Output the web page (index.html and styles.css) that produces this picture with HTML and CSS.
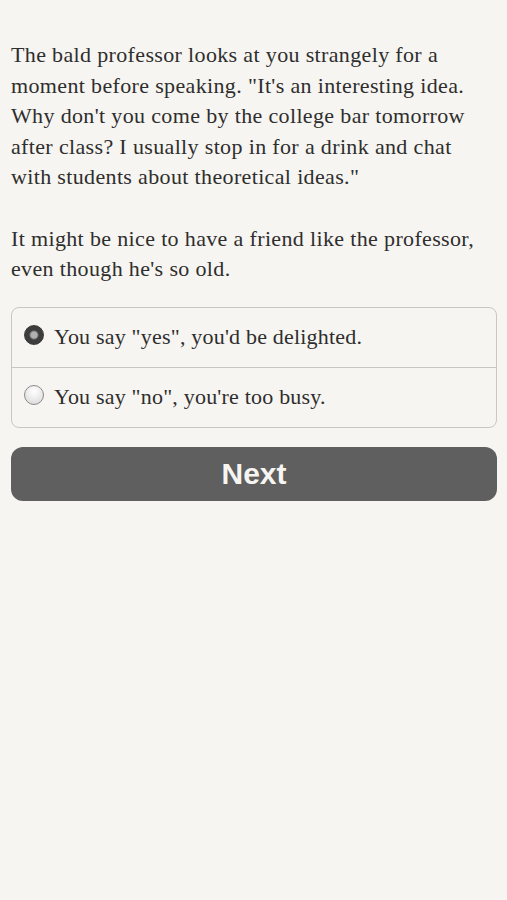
FILE: index.html
```html
<!DOCTYPE html>
<html lang="en">
<head>
    <meta charset="UTF-8">
    <meta name="viewport" content="width=device-width, initial-scale=1.0">
    <title>Story</title>
    <link rel="stylesheet" href="styles.css">
</head>
<body>
    <div class="page">
        <div class="passage">
            <p>The bald professor looks at you strangely for a moment before speaking. "It's an interesting idea. Why don't you come by the college bar tomorrow after class? I usually stop in for a drink and chat with students about theoretical ideas."</p>
            <p>It might be nice to have a friend like the professor, even though he's so old.</p>
        </div>

        <div class="choices">
            <label class="choice">
                <span class="radio checked"></span>
                <span>You say "yes", you'd be delighted.</span>
            </label>
            <label class="choice">
                <span class="radio"></span>
                <span>You say "no", you're too busy.</span>
            </label>
        </div>

        <button class="next">Next</button>
    </div>
</body>
</html>
```

FILE: styles.css
```css
body {
    margin: 0;
    background-color: #f7f5f1;
    color: #2e2e2e;
    font-family: "Liberation Serif", "DejaVu Serif", serif;
}

.page {
    padding: 40px 10px 20px 11px;
}

.passage p {
    margin: 0 0 31px 0;
    font-size: 22px;
    letter-spacing: 0.35px;
    line-height: 30.5px;
}

.choices {
    border: 1px solid #c9c7c4;
    border-radius: 8px;
    margin-top: -9px;
}

.choice {
    display: flex;
    align-items: center;
    gap: 10px;
    height: 59px;
    padding: 0 12px;
    font-size: 22px;
    letter-spacing: 0.2px;
}

.choice + .choice {
    border-top: 1px solid #c9c7c4;
}

.radio {
    width: 20px;
    height: 20px;
    border-radius: 50%;
    border: 1px solid #8a8a8a;
    background: radial-gradient(circle at 50% 30%, #ffffff, #d6d6d6);
    box-sizing: border-box;
    flex-shrink: 0;
    margin-top: -4px;
}

.radio.checked {
    border-color: #3a3a3a;
    background: radial-gradient(circle, #b0b0b0 0 3px, #3d3d3d 5px 10px);
}

.next {
    display: block;
    width: 100%;
    height: 54px;
    margin-top: 19px;
    border: none;
    border-radius: 12px;
    background-color: #5f5f5f;
    color: #f7f5f1;
    font-family: "Liberation Sans", Arial, sans-serif;
    font-weight: bold;
    font-size: 30px;
}
```
